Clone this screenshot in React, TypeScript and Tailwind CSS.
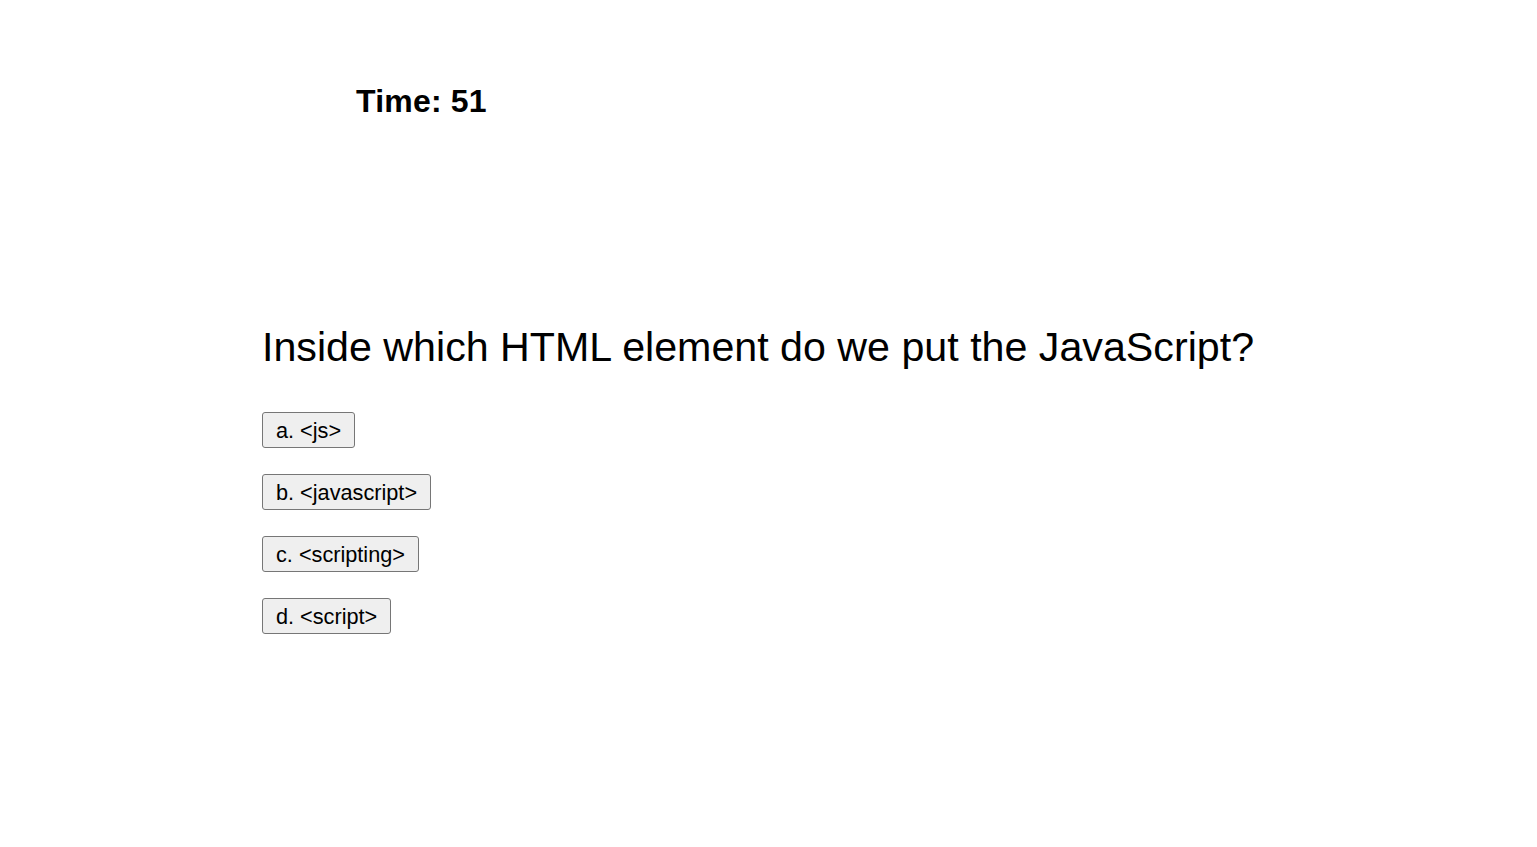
import React from 'react';

const options = ['a. <js>', 'b. <javascript>', 'c. <scripting>', 'd. <script>'];

export default function App() {
  return (
    <div className="min-h-screen bg-white text-black" style={{ fontFamily: '"Liberation Sans", Arial, sans-serif' }}>
      <div className="pl-[356px] pt-[80px]">
        <h2 className="text-[32px] font-bold leading-[42px] tracking-[0.2px]">Time: 51</h2>
      </div>
      <div className="pl-[262px] pt-[202px]">
        <h1 className="text-[41.2px] leading-[46px] whitespace-nowrap">Inside which HTML element do we put the JavaScript?</h1>
        <div className="mt-[42px] flex flex-col items-start gap-[26px]">
          {options.map(o => (
            <button
              key={o}
              className="h-[36px] px-[13px] pt-px text-[21.7px] bg-[#efefef] border border-[#767676] rounded-[3px] leading-none"
            >
              {o}
            </button>
          ))}
        </div>
      </div>
    </div>
  );
}
